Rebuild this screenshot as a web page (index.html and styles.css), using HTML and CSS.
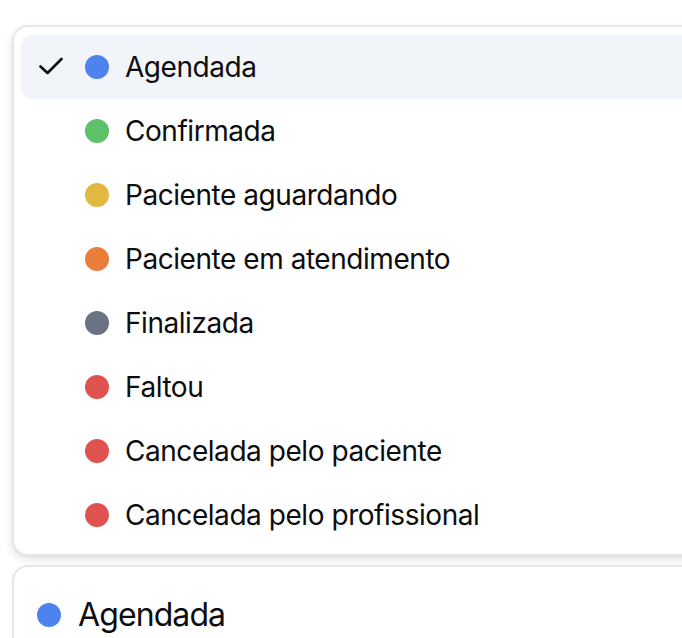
FILE: index.html
```html
<!DOCTYPE html>
<html lang="pt">
<head>
<meta charset="utf-8">
<title>Status</title>
<link rel="stylesheet" href="styles.css">
</head>
<body>
<div class="page">
  <div class="menu">
    <div class="item active">
      <span class="check"><svg viewBox="0 0 24 24" width="24" height="24"><path d="M1.5 11.5 L8.5 18 L22.5 4" fill="none" stroke="#111" stroke-width="2.6" stroke-linecap="round" stroke-linejoin="round"/></svg></span>
      <span class="dot blue"></span><span class="label">Agendada</span>
    </div>
    <div class="item"><span class="check"></span><span class="dot green"></span><span class="label">Confirmada</span></div>
    <div class="item"><span class="check"></span><span class="dot yellow"></span><span class="label">Paciente aguardando</span></div>
    <div class="item"><span class="check"></span><span class="dot orange"></span><span class="label">Paciente em atendimento</span></div>
    <div class="item"><span class="check"></span><span class="dot gray"></span><span class="label">Finalizada</span></div>
    <div class="item"><span class="check"></span><span class="dot red"></span><span class="label">Faltou</span></div>
    <div class="item"><span class="check"></span><span class="dot red"></span><span class="label">Cancelada pelo paciente</span></div>
    <div class="item"><span class="check"></span><span class="dot red"></span><span class="label">Cancelada pelo profissional</span></div>
  </div>
  <div class="trigger">
    <span class="dot blue"></span><span class="trigger-label">Agendada</span>
  </div>
</div>
</body>
</html>
```
FILE: styles.css
```css
* { box-sizing: border-box; }
html, body { margin: 0; padding: 0; background: #fff; overflow: hidden; }
body { font-family: Inter, "Noto Sans", sans-serif; color: #0d0d0f; }
.page {
  width: 740px;
  padding: 25px 0 0 12px;
  display: flex;
  flex-direction: column;
  gap: 9px;
}
.menu {
  border: 2px solid #e6e7eb;
  border-radius: 16px;
  padding: 8px 0 7px 7px;
  background: #fff;
  box-shadow: 0 4px 10px rgba(0,0,0,0.10), 0 1px 3px rgba(0,0,0,0.06);
}
.item {
  height: 64px;
  display: flex;
  align-items: center;
  padding-left: 18px;
  border-radius: 12px 0 0 12px;
  font-size: 28px;
  letter-spacing: -0.45px;
}
.item.active { background: #f1f4f8; }
.check { width: 24px; height: 24px; margin-right: 22px; display: flex; }
.dot { width: 24px; height: 24px; border-radius: 50%; flex: none; margin-right: 16px; }
.blue { background: #4e82ef; }
.green { background: #5dc16a; }
.yellow { background: #e2b940; }
.orange { background: #eb7d3a; }
.gray { background: #6b7281; }
.red { background: #e0524f; }
.label { line-height: 1; }
.trigger {
  border: 2px solid #e6e7eb;
  border-bottom: none;
  border-radius: 16px 16px 0 0;
  height: 80px;
  display: flex;
  padding-left: 23px;
  padding-top: 14px;
  align-items: flex-start;
}
.trigger .dot { margin-top: 22px; margin-right: 17px; }
.trigger-label { font-size: 32px; line-height: 1; margin-top: 18px; letter-spacing: -0.9px; }
```
